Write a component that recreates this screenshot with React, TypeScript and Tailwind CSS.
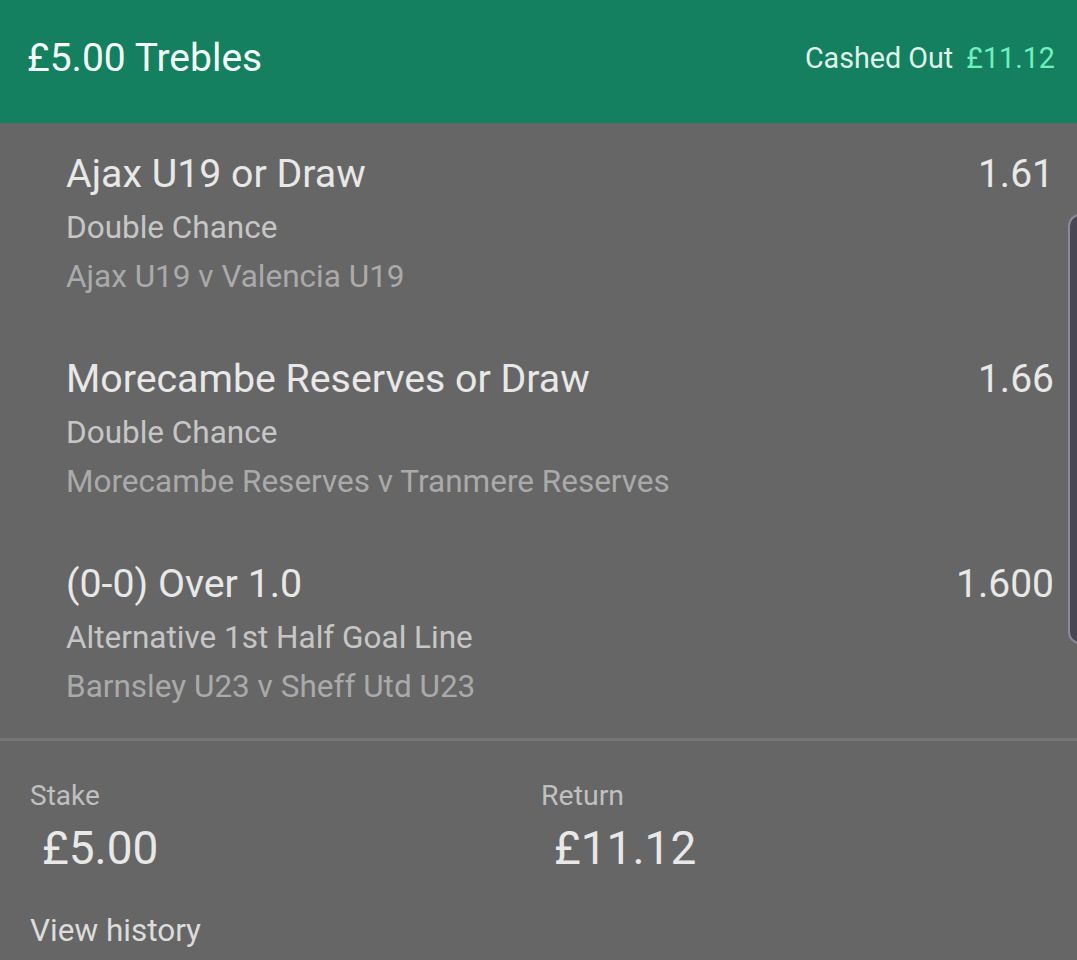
import React from "react";

const selections = [
  { name: "Ajax U19 or Draw", market: "Double Chance", event: "Ajax U19 v Valencia U19", odds: "1.61" },
  { name: "Morecambe Reserves or Draw", market: "Double Chance", event: "Morecambe Reserves v Tranmere Reserves", odds: "1.66" },
  { name: "(0-0) Over 1.0", market: "Alternative 1st Half Goal Line", event: "Barnsley U23 v Sheff Utd U23", odds: "1.600" },
];

export default function App() {
  return (
    <div className="relative w-[1077px] h-[960px] overflow-hidden bg-[#666666] font-['Roboto',sans-serif]">
      <div className="h-[123px] bg-[#148060] flex items-center justify-between pl-[27px] pr-[22px] pb-[6px]">
        <div className="text-[39px] text-[#f2fbf7] leading-none">£5.00 Trebles</div>
        <div className="flex items-center gap-[13px] text-[28.7px] leading-none">
          <span className="text-[#dff3ea]">Cashed Out</span>
          <span className="text-[#6ff0be]">£11.12</span>
        </div>
      </div>
      <div className="pt-[29px] pb-[27px] flex flex-col gap-[56px]">
        {selections.map((s) => (
          <div key={s.name} className="pl-[66px] pr-[23px] flex justify-between">
            <div className="flex flex-col">
              <div className="h-[45px] flex items-center text-[39.3px] text-[#e8e8e8] leading-none">{s.name}</div>
              <div className="mt-[6px] h-[50px] flex items-center text-[31.5px] text-[#c6c6c6] leading-none">{s.market}</div>
              <div className="h-[48px] flex items-center text-[31.5px] text-[#aaaaaa] leading-none">{s.event}</div>
            </div>
            <div className="h-[45px] flex items-center text-[39px] text-[#e8e8e8] leading-none">{s.odds}</div>
          </div>
        ))}
      </div>
      <div className="h-[3px] bg-[#757575]" />
      <div className="pl-[30px] pt-[39px]">
        <div className="flex">
          <div className="w-[511px]">
            <div className="h-[32px] flex items-center text-[28px] text-[#c0c0c0] leading-none">Stake</div>
            <div className="h-[72px] flex items-center pl-[12px] text-[46px] text-[#e8e8e8] leading-none">£5.00</div>
          </div>
          <div>
            <div className="h-[32px] flex items-center text-[28.5px] text-[#c0c0c0] leading-none">Return</div>
            <div className="h-[72px] flex items-center pl-[13px] text-[46px] text-[#e8e8e8] leading-none">£11.12</div>
          </div>
        </div>
        <div className="mt-[29px] h-[36px] flex items-center text-[31.5px] text-[#dcdcdc] leading-none">View history</div>
      </div>
      <div className="absolute left-[1068px] top-[214px] w-[20px] h-[430px] rounded-l-[12px] bg-[#484652] border-l-2 border-y-2 border-[#8c8a96]" />
    </div>
  );
}
